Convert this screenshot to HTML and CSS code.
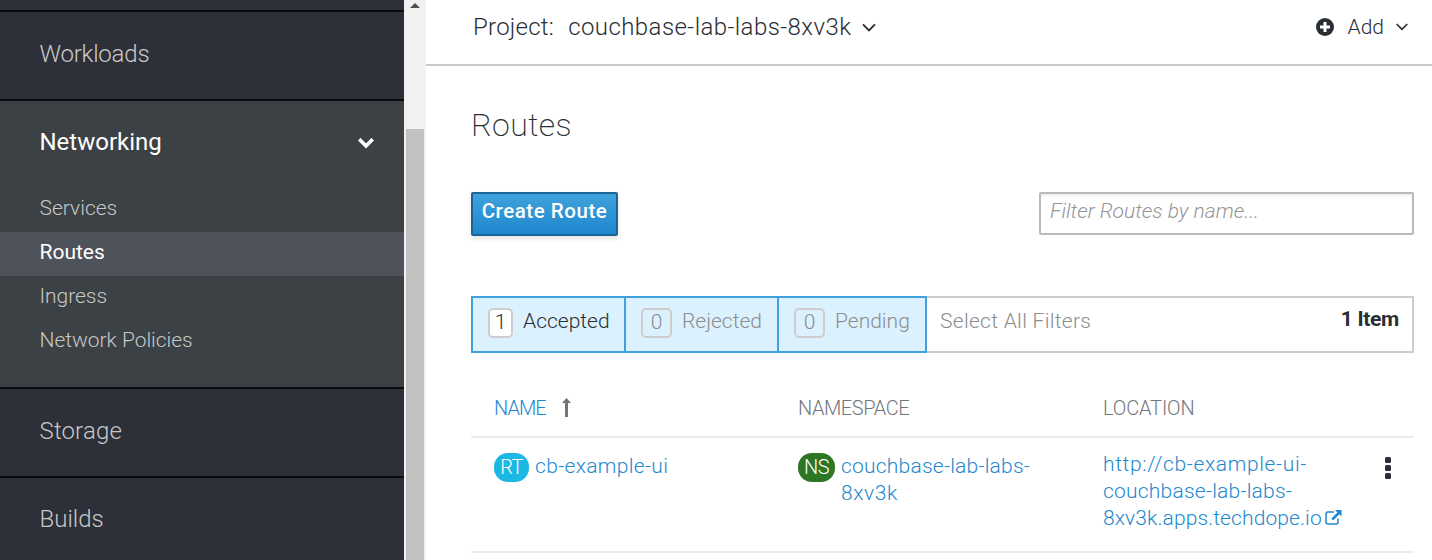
FILE: index.html
```html
<!DOCTYPE html>
<html lang="en">
<head>
<meta charset="utf-8">
<title>Routes</title>
<link rel="stylesheet" href="styles.css">
</head>
<body>
<div class="app">
  <nav class="sidebar">
    <div class="nav-top"></div>
    <div class="nav-section"><div class="nav-title t-workloads">Workloads</div></div>
    <div class="nav-section open">
      <div class="nav-title"><span>Networking</span>
        <svg class="nav-chevron" width="16" height="11" viewBox="0 0 16 11"><path d="M2.500 2.500 8 8l5.500-5.500" fill="none" stroke="#fff" stroke-width="3.700" stroke-linecap="square"/></svg>
      </div>
      <div class="nav-list">
        <a class="nav-item">Services</a>
        <a class="nav-item active">Routes</a>
        <a class="nav-item t-ingress">Ingress</a>
        <a class="nav-item t-policies">Network Policies</a>
      </div>
    </div>
    <div class="nav-section"><div class="nav-title t-storage">Storage</div></div>
    <div class="nav-section"><div class="nav-title t-builds">Builds</div></div>
  </nav>
  <div class="scrollbar">
    <svg class="scroll-arrow" width="10" height="6" viewBox="0 0 10 6"><path d="M5 0 10 5H0z" fill="#505050"/></svg>
    <div class="scroll-thumb"></div>
  </div>
  <main class="main">
    <header class="project-bar">
      <span class="project-label">Project:</span>
      <span class="project-name">couchbase-lab-labs-8xv3k</span>
      <svg class="project-chevron" width="14" height="9" viewBox="0 0 14 9"><path d="M1 1.300 7 7.300l6-6" fill="none" stroke="#292e34" stroke-width="1.900"/></svg>
      <span class="add">
        <svg width="18" height="18" viewBox="0 0 18 18"><circle cx="9" cy="9" r="9" fill="#292e34"/><path d="M9 4v10M4 9h10" stroke="#fff" stroke-width="3"/></svg>
        <span class="add-label">Add</span>
        <svg class="add-chevron" width="12" height="8" viewBox="0 0 12 8"><path d="M.7 1 6 6.300 11.300 1" fill="none" stroke="#292e34" stroke-width="1.700"/></svg>
      </span>
    </header>
    <section class="content">
      <h1 class="title">Routes</h1>
      <div class="toolbar">
        <button class="create">Create Route</button>
        <input class="filter" type="text" placeholder="Filter Routes by name...">
      </div>
      <div class="filters">
        <div class="seg seg-1"><span class="count">1</span><span class="seg-label">Accepted</span></div>
        <div class="seg seg-2 off"><span class="count">0</span><span class="seg-label">Rejected</span></div>
        <div class="seg seg-3 off"><span class="count">0</span><span class="seg-label">Pending</span></div>
        <div class="select-all"><span>Select All Filters</span></div>
        <div class="total">1 Item</div>
      </div>
      <div class="row head">
        <div class="cell sorted"><span class="t-name">NAME</span>
          <svg class="sort" width="9" height="19" viewBox="0 0 9 19"><path d="M4.500 0 9 5H6v14H3V5H0z" fill="#72767b"/></svg>
        </div>
        <div class="cell t-namespace">NAMESPACE</div>
        <div class="cell t-location">LOCATION</div>
      </div>
      <div class="row item">
        <div class="cell resource"><span class="badge rt">RT</span><a class="link t-cb">cb-example-ui</a></div>
        <div class="cell resource"><span class="badge ns">NS</span><a class="link"><span class="u2">couchbase-lab-labs-</span><br><span class="u4">8xv3k</span></a></div>
        <div class="cell location"><a class="link"><span class="u1">http://cb-example-ui-</span><br><span class="u2">couchbase-lab-labs-</span><br><span class="u3">8xv3k.apps.techdope.io</span><svg class="external" width="17" height="15" viewBox="0 0 17 15"><path d="M9 2H3Q1 2 1 4v8q0 2 2 2h8q2 0 2-2V8.500" fill="none" stroke="#1e88ce" stroke-width="1.500"/><path d="M10 0h6.500v6.500L14.300 4.300 8.200 10.400 6.400 8.600l6-6.100z" fill="#1e88ce"/></svg></a></div>
        <svg class="kebab" width="6" height="22" viewBox="0 0 6 22"><rect width="6" height="6" rx="1.500" y="0"/><rect width="6" height="6" rx="1.500" y="8"/><rect width="6" height="6" rx="1.500" y="16"/></svg>
      </div>
    </section>
  </main>
</div>
</body>
</html>
```
FILE: styles.css
```css
* { box-sizing: border-box; }
body { margin: 0; font-family: Roboto, "Liberation Sans", sans-serif; font-weight: 300; color: #292e34; background: #fff; }
.app { display: flex; width: 1432px; height: 560px; overflow: hidden; white-space: nowrap; }

/* Sidebar */
.sidebar { width: 404px; flex: none; background: #2d3038; color: #c8c8c8; }
.nav-top { height: 10px; }
.nav-section { border-top: 2px solid #0b0b0d; }
.nav-title { display: flex; align-items: center; justify-content: space-between; height: 87px; padding: 0 30px 4px 39.500px; font-size: 24px; }
.t-workloads { letter-spacing: -.2px; padding-bottom: 3px; }
.t-storage { letter-spacing: .15px; padding-bottom: 3px; }
.t-builds { padding-bottom: 5px; }
.open { background: #3c4145; height: 288px; }
.open .nav-title { color: #fff; font-weight: 400; padding-bottom: 5px; }
.nav-chevron { margin-top: 3px; }
.nav-item { display: block; height: 44px; line-height: 40px; padding-left: 39.500px; font-size: 21px; }
.nav-item.active { background: #4e525b; color: #fff; font-weight: 400; }
.t-ingress { letter-spacing: -.05px; }
.t-policies { letter-spacing: -.03px; }

.scrollbar { width: 22px; flex: none; background: #f1f1f1; padding: 3px 2px 0; display: flex; flex-direction: column; }
.scroll-arrow { align-self: center; flex: none; margin-bottom: 120px; }
.scroll-thumb { background: #c1c1c1; flex: 1; }

/* Project bar */
.main { flex: 1; min-width: 0; }
.project-bar { display: flex; align-items: center; height: 66px; padding: 0 24px 10px 47px; border-bottom: 2px solid #c9c9c9; font-size: 24px; }
.project-label { letter-spacing: .25px; }
.project-name { margin-left: 14px; letter-spacing: .43px; }
.project-chevron { margin-left: 10.500px; }
.add { display: flex; align-items: center; margin-left: auto; font-size: 21px; }
.add-label { margin: 0 12px 0 14px; }

.content { padding: 0 18px 0 45px; }
.title { margin: 0; padding-top: 37px; height: 126px; line-height: 44px; font-size: 32px; font-weight: 200; letter-spacing: .4px; }
.toolbar { display: flex; justify-content: space-between; height: 104px; }
.create { width: 147px; height: 44px; padding: 0 0 6px; border: 2px solid #1a6596; border-radius: 2px; background: linear-gradient(#40a2dc, #1e87ce); box-shadow: 0 3px 5px rgba(0,0,0,.1); color: #fff; font: 500 20.500px Roboto, sans-serif; letter-spacing: .55px; }
.filter { width: 375px; height: 43px; padding: 0 9px 5px; border: 2px solid #b9b9b9; border-radius: 2px; font: italic 300 21px Roboto, sans-serif; outline: 0; box-shadow: inset 0 2px 2px rgba(0,0,0,.06); }
.filter::placeholder { color: #969696; opacity: 1; }

/* Status filters */
.filters { display: flex; height: 57px; border: 2px solid #cdcdcd; font-size: 21px; }
.seg { display: flex; align-items: center; margin: -2px 0 -2px -2px; padding: 0 0 4px 15px; border: 2px solid #40a2dc; background: #dbf1fe; }
.seg-1, .seg-2 { width: 155px; }
.seg-3 { width: 150px; }
.count { display: flex; align-items: center; justify-content: center; width: 25px; height: 30px; padding-bottom: 1px; border: 2px solid #cdcdcd; border-radius: 5px; background: #fff; }
.off .count { width: 31px; background: none; }
.seg-label { margin: -3px 0 0 10px; }
.off { color: #8b8d8f; }
.select-all { padding: 11px 0 0 13px; line-height: 24px; color: #8b8d8f; letter-spacing: .3px; }
.total { margin-left: auto; padding: 9px 13px 0 0; line-height: 24px; font-weight: 700; letter-spacing: -.3px; }

/* Table */
.row { display: grid; grid-template-columns: 304px 305px 1fr auto; padding-left: 23px; border-bottom: 2px solid #ebebeb; }
.head { height: 85px; padding-top: 43px; line-height: 24px; font-size: 20px; color: #72767b; }
.sorted { display: flex; align-items: center; height: 24px; color: #1e88ce; }
.t-name { letter-spacing: -1px; }
.t-namespace { letter-spacing: -.45px; }
.t-location { letter-spacing: -.15px; }
.sort { margin: -2px 0 0 16px; }
.item { height: 115px; padding-top: 15px; font-size: 21px; line-height: 27px; }
.link { color: #1e88ce; }
.t-cb { letter-spacing: .33px; }
.u1 { letter-spacing: .64px; }
.u2 { letter-spacing: .22px; }
.u3 { letter-spacing: .1px; }
.u4 { letter-spacing: .6px; }
.resource { display: flex; align-items: flex-start; }
.badge { height: 29px; width: 35px; border-radius: 14px; text-align: center; color: #fff; background: #1cb8e4; margin-right: 6px; font-size: 20px; letter-spacing: -.6px; line-height: 28px; }
.badge.ns { background: #2d7623; width: 37px; }
.external { margin-left: 3px; }
.location { margin-top: -2px; }
.kebab { margin: 4px 23px 0 0; fill: #292e34; }
```
